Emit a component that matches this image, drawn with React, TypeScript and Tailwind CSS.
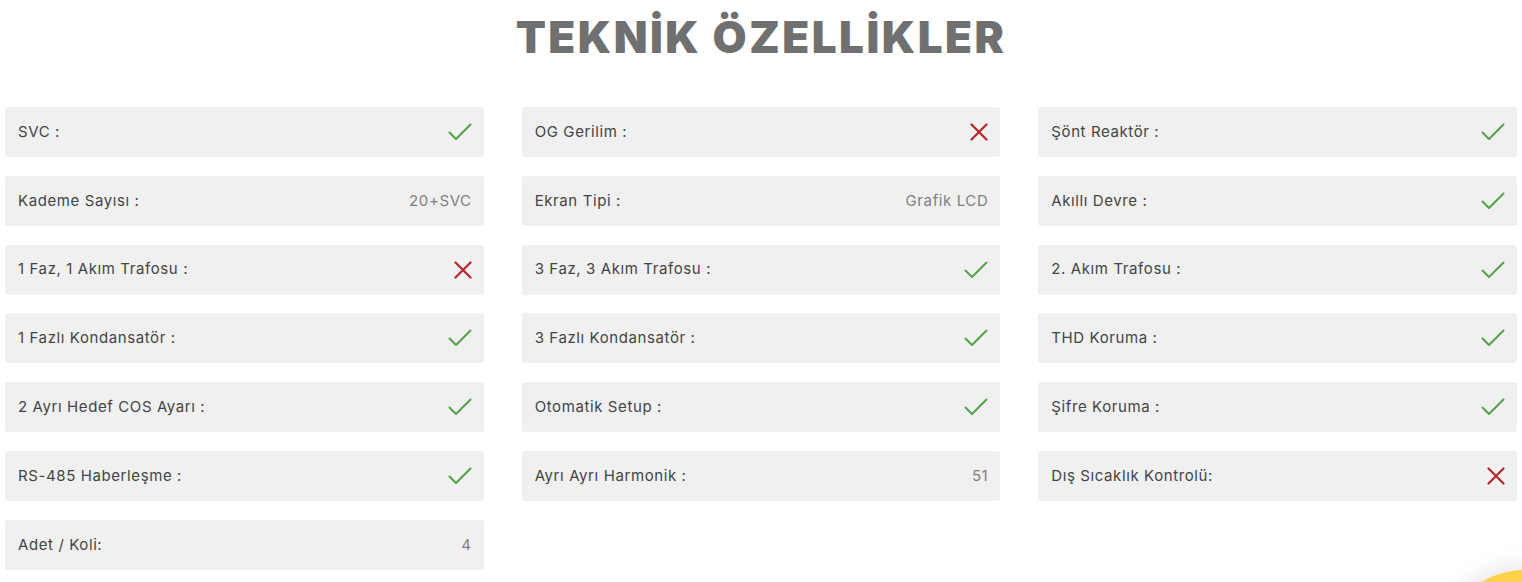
import type { ReactNode } from 'react'

type Spec = { label: string; value: 'yes' | 'no' | string }

const COLUMNS: Spec[][] = [
  [
    { label: 'SVC :', value: 'yes' },
    { label: 'Kademe Sayısı :', value: '20+SVC' },
    { label: '1 Faz, 1 Akım Trafosu :', value: 'no' },
    { label: '1 Fazlı Kondansatör :', value: 'yes' },
    { label: '2 Ayrı Hedef COS Ayarı :', value: 'yes' },
    { label: 'RS-485 Haberleşme :', value: 'yes' },
    { label: 'Adet / Koli:', value: '4' },
  ],
  [
    { label: 'OG Gerilim :', value: 'no' },
    { label: 'Ekran Tipi :', value: 'Grafik LCD' },
    { label: '3 Faz, 3 Akım Trafosu :', value: 'yes' },
    { label: '3 Fazlı Kondansatör :', value: 'yes' },
    { label: 'Otomatik Setup :', value: 'yes' },
    { label: 'Ayrı Ayrı Harmonik :', value: '51' },
  ],
  [
    { label: 'Şönt Reaktör :', value: 'yes' },
    { label: 'Akıllı Devre :', value: 'yes' },
    { label: '2. Akım Trafosu :', value: 'yes' },
    { label: 'THD Koruma :', value: 'yes' },
    { label: 'Şifre Koruma :', value: 'yes' },
    { label: 'Dış Sıcaklık Kontrolü:', value: 'no' },
  ],
]

function Check() {
  return (
    <svg width="24" height="20" viewBox="0 0 24 20" fill="none">
      <path d="M1.5 10.5 L8 17 L22.5 2.5" stroke="#55a24a" strokeWidth="2" strokeLinecap="round" strokeLinejoin="round" />
    </svg>
  )
}

function Cross() {
  return (
    <svg width="18" height="18" viewBox="0 0 18 18" fill="none">
      <path d="M1.5 1.5 L16.5 16.5 M16.5 1.5 L1.5 16.5" stroke="#b8262c" strokeWidth="2.2" strokeLinecap="round" />
    </svg>
  )
}

function Row({ spec }: { spec: Spec }) {
  let right: ReactNode
  if (spec.value === 'yes') right = <Check />
  else if (spec.value === 'no') right = <Cross />
  else right = <span className="text-[15px] tracking-[0.6px] text-[#808080]">{spec.value}</span>

  return (
    <div className="h-[50px] rounded-[3px] bg-[#f0f0f0] flex items-center justify-between pl-[13px] pr-[12px]">
      <span className="text-[15px] tracking-[0.6px] text-[#444444]">{spec.label}</span>
      {right}
    </div>
  )
}

export default function App() {
  return (
    <div className="relative w-[1522px] h-[582px] overflow-hidden bg-white font-['Inter','Liberation_Sans',sans-serif]">
      <h1 className="pt-[9px] text-center text-[44px] leading-[56px] font-black text-[#707070] tracking-[2.5px]">
        TEKNİK ÖZELLİKLER
      </h1>

      <div className="mt-[42px] px-[5px] grid grid-cols-3 gap-x-[38px] items-start">
        {COLUMNS.map((col, i) => (
          <div key={i} className="flex flex-col gap-[18.8px]">
            {col.map((s) => (
              <Row key={s.label} spec={s} />
            ))}
          </div>
        ))}
      </div>

      {/* floating button in the corner */}
      <div className="absolute left-[1440px] top-[570px] w-[170px] h-[170px] rounded-full bg-[#fdd14b] shadow-[0_0_28px_rgba(0,0,0,0.14)]" />
    </div>
  )
}
